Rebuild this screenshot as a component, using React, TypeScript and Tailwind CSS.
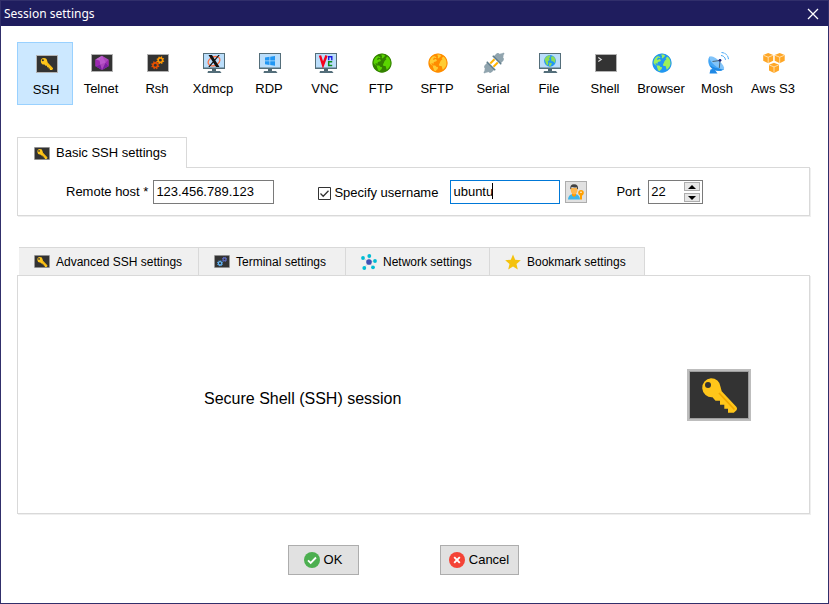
import { useState } from "react";
import type { ReactNode } from "react";
import { FcGlobe } from "react-icons/fc";

function KeyShape() {
  return (
    <>
      <path
        fill="#ffc61a"
        d="M24 9.200a9.500 9.500 0 0 1 9.500 8.500l1.200 4.600L49.500 38q1.200 1.800 0 3.300l-2.700 2.400H41v-4h-3.700v-4H33v-4h-4.500l-3-3.500A9.500 9.500 0 1 1 24 9.200z"
      />
      <path stroke="#f0a800" strokeWidth="1.800" fill="none" d="M32 24l15.500 16.500" />
      <circle cx="21" cy="16" r="3" fill="#333" />
    </>
  );
}

function Screen({ children, small = false }: { children?: ReactNode; small?: boolean }) {
  return (
    <svg
      viewBox="0 0 22 18"
      className={small ? "h-[13px] w-4 shrink-0" : "h-[18px] w-[22px] shrink-0"}
      aria-hidden="true"
    >
      <rect width="22" height="18" fill="#b3b3b3" />
      <rect x="1" y="1" width="20" height="16" fill="#333" />
      {children}
    </svg>
  );
}

function KeyScreen({ small = false }: { small?: boolean }) {
  return (
    <Screen small={small}>
      <g transform={small ? "translate(-1.500 -1) scale(.4)" : "translate(-.5 -.3) scale(.35)"}>
        <KeyShape />
      </g>
    </Screen>
  );
}

function LargeKey() {
  return (
    <svg viewBox="0 0 64 52" className="h-[52px] w-16 shrink-0" aria-hidden="true">
      <rect width="64" height="52" fill="#bdbdbd" />
      <rect x="2" y="2" width="60" height="48" fill="#9e9e9e" />
      <rect x="3" y="3" width="58" height="46" fill="#333" />
      <KeyShape />
    </svg>
  );
}

function Gear({ x, y, r, color }: { x: number; y: number; r: number; color: string }) {
  return (
    <g transform={`translate(${x} ${y})`} stroke={color} fill="none">
      <circle r={r * 0.7} strokeWidth={r * 0.5} />
      {[0, 45, 90, 135].map((a) => (
        <path
          key={a}
          transform={`rotate(${a + 20})`}
          strokeWidth={r * 0.4}
          d={`M0 ${-r * 1.25}V${-r * 0.7}M0 ${r * 0.7}V${r * 1.25}`}
        />
      ))}
    </g>
  );
}

function Monitor({ children }: { children: ReactNode }) {
  return (
    <svg viewBox="0 0 22 20" className="h-5 w-[22px]" aria-hidden="true">
      <path fill="#546e7a" d="M0 0h22v16H0zM9 16h4v2H9zM5 18h12l1.500 2h-14z" />
      <path fill="#455a64" d="M9 16.500h4v1H9z" />
      <path fill="#bbdefb" d="M1 1h20v13.500H1z" />
      {children}
    </svg>
  );
}

const telnetIcon = (
  <Screen>
    <path fill="#ab47bc" d="M11 1.800l6.500 3.700v6.800L11 16l-6.500-3.700V5.500z" />
    <path fill="#ba68c8" d="M11 1.800L4.500 5.500l4.200 1.200z" />
    <path fill="#7b1fa2" d="M4.500 12.300l4.800-1.800L11 16zM11 16l3.700-7.500 2.800 3.800z" />
    <path fill="#9c27b0" d="M4.500 5.500l4.200 1.200.6 3.800-4.800 1.800zM17.500 5.500l-2.800 3 2.800 3.800z" />
    <path fill="#ba55cc" d="M8.700 6.700L11 1.800l3.700 6.700-5.400 2z" />
  </Screen>
);

const rshIcon = (
  <Screen>
    <Gear x={13.4} y={6.2} r={3.1} color="#ff9800" />
    <Gear x={8.3} y={11.2} r={3.3} color="#e65100" />
  </Screen>
);

const xdmcpIcon = (
  <Monitor>
    <ellipse cx="11" cy="8.200" rx="6.200" ry="4.300" transform="rotate(-25 11 8.200)" fill="none" stroke="#ff7043" strokeWidth="1.300" />
    <path fill="#111" d="M5.500 2h3.500l7.500 12H13zM15.300 2h1.500L6.700 14H5.200z" />
  </Monitor>
);

const rdpIcon = (
  <Monitor>
    <path fill="#2196f3" d="M6 4.500l4.500-.7v3.700H6zM11.200 3.700L16 3v4.500h-4.800zM6 8.200h4.500v3.700L6 11.200zM11.200 8.200H16v4.500l-4.800-.7z" />
  </Monitor>
);

const vncIcon = (
  <Monitor>
    <path fill="none" stroke="#f5001d" strokeWidth="2.400" d="M5 2.500l3 9.500L11.500 2.500" />
    <path fill="none" stroke="#1a1ae0" strokeWidth="1.400" d="M13.700 7.200V3.700h3.100v3.500" />
    <path fill="none" stroke="#0f8a1c" strokeWidth="1.500" d="M17.200 8.800h-3.500v3.700h3.500" />
  </Monitor>
);

const serialIcon = (
  <svg viewBox="0 0 22 22" className="h-[22px] w-[22px]" aria-hidden="true">
    <g transform="rotate(45 11 11)">
      <path fill="#ffb300" d="M7.700 8h2v6h-2zM12.300 8h2v6h-2z" />
      <path fill="#90a4ae" d="M6 7V3.500Q6 .5 9 .5V-1h1v-2h2v2h1V.500q3 0 3 3V7zM6 15v3.500q0 3 3 3V23h1v2h2v-2h1v-1.500q3 0 3-3V15z" />
      <path fill="#607d8b" d="M5 6h12v1.500H5zM5 14.500h12V16H5z" />
    </g>
  </svg>
);

const fileIcon = (
  <Monitor>
    <circle cx="11" cy="7.800" r="5.900" fill="#2196f3" />
    <path fill="#8bdc55" d="M5.500 6l2-2.500 3-1.500 1 1.500-1.500 2 .8 1.500-2 1.300.6 2-1 2.500L7 10.500zM12 4l2-1 2.500 3-.5 4-2.500-2-1 .5zM10.500 9.500l2.500 1-1.500 2.800-1.700-.3z" />
  </Monitor>
);

const shellIcon = (
  <Screen>
    <path fill="none" stroke="#ddd" strokeWidth="1.100" d="M3.300 3.500l3 2-3 2" />
  </Screen>
);

const moshIcon = (
  <svg viewBox="0 0 22 22" className="h-[22px] w-[22px]" aria-hidden="true">
    <path fill="#1e88e5" d="M3.500 17.500l4-1 1.500 3 1.500 2H2.500z" />
    <path fill="#42a5f5" d="M2.500 4.500C-1 10 3 20 14 18.800q2.500-.8 3-1.800z" />
    <path fill="#1e88e5" d="M2.500 13Q6 19.500 14 18.800l3-1.800Q8 17 2.500 13z" />
    <ellipse cx="9.700" cy="10.800" rx="9.400" ry="3.200" transform="rotate(41 9.700 10.800)" fill="#82c4fa" />
    <path fill="none" stroke="#455a64" strokeWidth=".9" d="M5.500 9.500l7.500-1-.7 7.500" />
    <circle cx="13" cy="8.300" r="1.400" fill="#1a237e" />
    <path fill="none" stroke="#42a5f5" strokeWidth="1" strokeDasharray="3 .7" d="M14 3.500Q18 4 18.500 8M14.500.500q6.500.7 7 7" />
  </svg>
);

function Cube({ x, y }: { x: number; y: number }) {
  return (
    <g transform={`translate(${x} ${y})`}>
      <path fill="#ffa726" d="M5.200 0l5 2v5.800l-5 2.400-5-2.400V2z" />
      <path fill="none" stroke="#fff3df" strokeWidth=".7" d="M.5 2.300l4.700 1.900 4.700-1.900M5.200 4.200v5.800" />
    </g>
  );
}

const awsIcon = (
  <svg viewBox="0 0 22 20" className="h-5 w-[22px]" aria-hidden="true">
    <Cube x={0} y={0} />
    <Cube x={11.5} y={0} />
    <Cube x={5.8} y={9.7} />
  </svg>
);

const sessions: { name: string; icon: ReactNode }[] = [
  { name: "SSH", icon: <KeyScreen /> },
  { name: "Telnet", icon: telnetIcon },
  { name: "Rsh", icon: rshIcon },
  { name: "Xdmcp", icon: xdmcpIcon },
  { name: "RDP", icon: rdpIcon },
  { name: "VNC", icon: vncIcon },
  { name: "FTP", icon: <FcGlobe size={22} className="[&>path:first-child]:fill-[#5ad400] [&>path:last-child]:fill-[#338000]" /> },
  { name: "SFTP", icon: <FcGlobe size={22} className="[&>path:first-child]:fill-[#ffcc33] [&>path:last-child]:fill-[#ff8c00]" /> },
  { name: "Serial", icon: serialIcon },
  { name: "File", icon: fileIcon },
  { name: "Shell", icon: shellIcon },
  { name: "Browser", icon: <FcGlobe size={22} className="[&>path:first-child]:fill-[#9cf05a] [&>path:last-child]:fill-[#2196f3]" /> },
  { name: "Mosh", icon: moshIcon },
  { name: "Aws S3", icon: awsIcon },
];

const networkIcon = (
  <svg viewBox="0 0 16 16" className="h-4 w-4 shrink-0" aria-hidden="true">
    <path stroke="#cfd8dc" strokeWidth="1" d="M8 8V2M8 8L2 4M8 8l6-1M8 8l-5 6M8 8l4 5" />
    <circle cx="8" cy="8" r="2.800" fill="#3f51b5" />
    <g fill="#00bcd4">
      <circle cx="8.300" cy="2" r="1.900" />
      <circle cx="2" cy="4" r="1.900" />
      <circle cx="14" cy="7" r="1.900" />
      <circle cx="3.300" cy="14" r="1.900" />
      <circle cx="12" cy="13.300" r="1.900" />
    </g>
  </svg>
);

const starIcon = (
  <svg viewBox="0 0 16 16" className="h-4 w-4 shrink-0" aria-hidden="true">
    <path fill="#f4c20d" d="M8 .5l2.200 5.200 5.600.5-4.300 3.700 1.300 5.600L8 12.500l-4.800 3 1.300-5.600L.2 6.200l5.600-.5z" />
  </svg>
);

const tabs: { name: string; icon: ReactNode; width: string }[] = [
  { name: "Advanced SSH settings", icon: <KeyScreen small />, width: "w-[180px]" },
  {
    name: "Terminal settings",
    icon: (
      <Screen small>
        <Gear x={14.5} y={6} r={2.9} color="#5c6bc0" />
        <Gear x={8.3} y={11.5} r={3.3} color="#64b5f6" />
      </Screen>
    ),
    width: "w-[147px]",
  },
  { name: "Network settings", icon: networkIcon, width: "w-36" },
  { name: "Bookmark settings", icon: starIcon, width: "w-[155px]" },
];

function UserKeyIcon() {
  return (
    <svg viewBox="0 0 16 16" className="h-4 w-4" aria-hidden="true">
      <path fill="#3fb5e8" d="M0 15.500Q.3 11 4 10.300h4q3.800.7 4 5.200z" />
      <path fill="#ff9800" d="M4 9h4v2.500L6 13l-2-1.500z" />
      <path fill="#ffb74d" d="M2.700 4h6.800q.2 6.500-3.400 6.500T2.700 4z" />
      <path fill="#424242" d="M2.300 5Q1.800.5 6 .3q4.500 0 4 4.700l-.8.3-.5-2Q6 3.800 3.500 3L3 5.300z" />
      <circle cx="13" cy="8.800" r="2.800" fill="#ffa000" />
      <path fill="#ffa000" d="M12 10h2v5l-1 1-1-1z" />
      <circle cx="13" cy="8.200" r=".8" fill="#fff" />
    </svg>
  );
}

export default function App() {
  const [session, setSession] = useState("SSH");
  const [host, setHost] = useState("123.456.789.123");
  const [user, setUser] = useState("ubuntu");
  const [withUser, setWithUser] = useState(true);
  const [port, setPort] = useState(22);

  return (
    <div className="flex min-h-screen flex-col border border-[#312f6b] bg-white font-['Liberation_Sans',Arial,sans-serif] text-[13px] text-black">
      <header className="flex h-[25px] items-center justify-between bg-[#1f1d5e] pr-[9px] pl-[3px] text-white">
        <h1 className="font-['Noto_Sans','Open_Sans',sans-serif] text-[12px]">Session settings</h1>
        <button type="button" aria-label="Close">
          <svg viewBox="0 0 12 12" className="h-3 w-3" aria-hidden="true">
            <path d="M1 1l10 10M11 1L1 11" stroke="#fff" strokeWidth="1.300" />
          </svg>
        </button>
      </header>

      <main className="flex flex-1 flex-col px-4 pt-4 pb-7">
        <nav className="flex" aria-label="Session type">
          {sessions.map((s) => (
            <button
              key={s.name}
              type="button"
              onClick={() => setSession(s.name)}
              className={`flex h-[63px] w-14 flex-col items-center gap-1 border whitespace-nowrap ${
                s.name === session ? "border-[#99d1ff] bg-[#cce8ff] pt-[9px] pl-0.5" : "border-transparent pt-2"
              }`}
            >
              <span className="flex h-6 items-center pl-0.5">{s.icon}</span>
              <span className="leading-5">{s.name}</span>
            </button>
          ))}
        </nav>

        <section className="mt-8 pr-0.5">
          <div className="-mb-px flex">
            <button
              type="button"
              className="relative flex h-[31px] w-[170px] items-center gap-1.5 border border-b-0 border-[#d9d9d9] bg-white pl-4"
            >
              <KeyScreen small />
              Basic SSH settings
            </button>
          </div>
          <div className="border border-[#d9d9d9] pt-3 pb-[11px] pl-12 shadow-[1px_1px_0_#efefef]">
            <div className="flex h-6 items-center">
              <label htmlFor="host">Remote host *</label>
              <input
                id="host"
                value={host}
                onChange={(e) => setHost(e.target.value)}
                className="ml-[5px] h-6 w-[121px] border border-[#7a7a7a] px-0.5 pb-0.5 outline-none"
              />
              <input
                id="with-user"
                type="checkbox"
                checked={withUser}
                onChange={(e) => setWithUser(e.target.checked)}
                className="peer sr-only"
              />
              <label htmlFor="with-user" className="ml-11 flex h-[22px] items-center gap-[3px] self-end">
                <svg viewBox="0 0 13 13" className="h-[13px] w-[13px]" aria-hidden="true">
                  <path fill="#fff" stroke="#333" d="M.5.5h12v12H.5z" />
                  {withUser && <path fill="none" stroke="#333" strokeWidth="1.300" d="M2.500 6.500l2.700 2.700 5.300-5.500" />}
                </svg>
                Specify username
              </label>
              <div className="relative ml-3">
                <input
                  aria-label="Username"
                  value={user}
                  onChange={(e) => setUser(e.target.value)}
                  className="block h-6 w-[110px] border border-[#0078d7] px-0.5 pb-0.5 caret-transparent outline-none"
                />
                <span className="absolute top-[3px] left-[42px] h-4 w-px bg-black" />
              </div>
              <button
                type="button"
                aria-label="Manage users"
                className="ml-[5px] flex h-[22px] w-[22px] items-center justify-center border border-[#adadad] bg-[#e1e1e1]"
              >
                <UserKeyIcon />
              </button>
              <label htmlFor="port" className="ml-[29px]">
                Port
              </label>
              <div className="ml-2 flex h-6 w-[55px] items-center border border-[#7a7a7a] pr-0.5 pl-0.5">
                <input
                  id="port"
                  value={port}
                  onChange={(e) => setPort(Number(e.target.value) || 0)}
                  className="min-w-0 flex-1 outline-none"
                />
                <div className="flex flex-col gap-0.5">
                  <button
                    type="button"
                    aria-label="Increase port"
                    onClick={() => setPort(port + 1)}
                    className="flex h-[9px] w-4 items-center justify-center border border-[#adadad] bg-[#e6e6e6]"
                  >
                    <svg viewBox="0 0 8 4" className="h-1 w-2" aria-hidden="true">
                      <path d="M4 0l4 4H0z" />
                    </svg>
                  </button>
                  <button
                    type="button"
                    aria-label="Decrease port"
                    onClick={() => setPort(port - 1)}
                    className="flex h-[9px] w-4 items-center justify-center border border-[#adadad] bg-[#e6e6e6]"
                  >
                    <svg viewBox="0 0 8 4" className="h-1 w-2" aria-hidden="true">
                      <path d="M4 4L0 0h8z" />
                    </svg>
                  </button>
                </div>
              </div>
            </div>
          </div>
        </section>

        <section className="mt-[31px] flex flex-1 flex-col pr-0.5">
          <div className="flex pl-0.5">
            {tabs.map((t) => (
              <button
                key={t.name}
                type="button"
                className={`flex h-7 items-center gap-1.5 border-t border-r border-[#d9d9d9] bg-[#f0f0f0] pl-[15px] text-[12px] whitespace-nowrap ${t.width}`}
              >
                {t.icon}
                {t.name}
              </button>
            ))}
          </div>
          <div className="flex flex-1 items-center justify-between border border-[#d9d9d9] pr-[58px] pl-[186px] shadow-[1px_1px_0_#efefef]">
            <p className="pt-2 text-[16px]">Secure Shell (SSH) session</p>
            <LargeKey />
          </div>
        </section>

        <footer className="mt-[31px] flex justify-center gap-[81px] pr-[23px]">
          <button type="button" className="flex h-[30px] w-[71px] items-center justify-center gap-1 border border-[#adadad] bg-[#e1e1e1]">
            <svg viewBox="0 0 16 16" className="h-4 w-4" aria-hidden="true">
              <circle cx="8" cy="8" r="8" fill="#4caf50" />
              <path fill="none" stroke="#fff" strokeWidth="1.800" d="M4 8.300l2.700 2.600L12 5.500" />
            </svg>
            OK
          </button>
          <button type="button" className="flex h-[30px] w-[79px] items-center justify-center gap-1 border border-[#adadad] bg-[#e1e1e1]">
            <svg viewBox="0 0 16 16" className="h-4 w-4" aria-hidden="true">
              <circle cx="8" cy="8" r="8" fill="#f44336" />
              <path fill="none" stroke="#fff" strokeWidth="1.900" d="M5.200 5.200l5.600 5.600M10.800 5.200l-5.600 5.600" />
            </svg>
            Cancel
          </button>
        </footer>
      </main>
    </div>
  );
}
